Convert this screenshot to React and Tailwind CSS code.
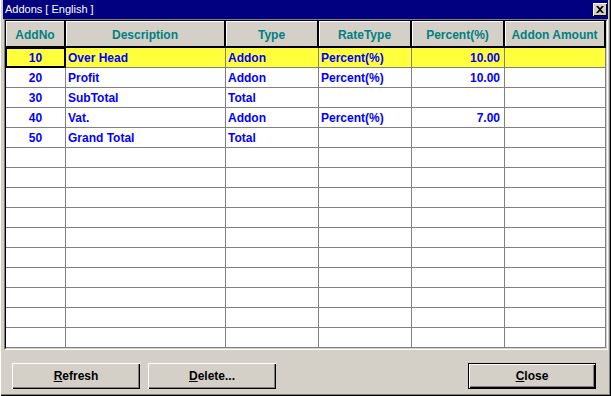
import React from 'react';

const rows = [
    { no: '10', desc: 'Over Head', type: 'Addon', rate: 'Percent(%)', pct: '10.00' },
    { no: '20', desc: 'Profit', type: 'Addon', rate: 'Percent(%)', pct: '10.00' },
    { no: '30', desc: 'SubTotal', type: 'Total', rate: '', pct: '' },
    { no: '40', desc: 'Vat.', type: 'Addon', rate: 'Percent(%)', pct: '7.00' },
    { no: '50', desc: 'Grand Total', type: 'Total', rate: '', pct: '' },
];

while (rows.length < 15) rows.push({ no: '', desc: '', type: '', rate: '', pct: '' });

const headers = ['AddNo', 'Description', 'Type', 'RateType', 'Percent(%)', 'Addon Amount'];

const cols = 'grid grid-cols-[60px_160px_93px_93px_93px_1fr]';

function WinButton({ children, isDefault }) {
    const inner = (
        <div className="h-full w-full bg-[#d4d0c8] shadow-[inset_1px_1px_0_#fff,inset_-1px_-1px_0_#000,inset_-2px_-2px_0_#808080] flex items-center justify-center text-[12px] font-bold text-black">
            {children}
        </div>
    );
    if (isDefault) {
        return <div className="w-[128px] h-[26px] border border-black">{inner}</div>;
    }
    return <div className="w-[128px] h-[26px]">{inner}</div>;
}

export default function App() {
    return (
        <div
            className="w-[611px] h-[396px] bg-[#d4d0c8] pl-[3px] shadow-[inset_1px_0_0_#fff,inset_-1px_-1px_0_#000,inset_-2px_-2px_0_#808080] flex flex-col"
            style={{ fontFamily: '"Liberation Sans", Arial, sans-serif' }}
        >
            {/* title bar */}
            <div className="w-[605px] h-[19px] bg-[#000080] flex items-center justify-between pl-[2px] pr-[1px]">
                <span className="text-white text-[11px] leading-none">Addons [ English ]</span>
                <div className="w-[14px] h-[13px] bg-[#d4d0c8] shadow-[inset_1px_1px_0_#fff,inset_-1px_-1px_0_#000] flex items-center justify-center">
                    <svg width="8" height="7" viewBox="0 0 8 7">
                        <path d="M0 0h2l2 2 2-2h2L5 3.5 8 7H6L4 5 2 7H0l3-3.5z" fill="#000" />
                    </svg>
                </div>
            </div>

            {/* grid */}
            <div className="ml-[1px] w-[604px] border border-t-[#808080] border-l-[#808080] border-r-white border-b-white">
                <div className="border border-t-black border-l-black border-r-[#d4d0c8] border-b-[#d4d0c8] bg-white">
                    <div className={cols + ' h-[27px]'}>
                        {headers.map((h) => (
                            <div
                                key={h}
                                className="bg-[#d4d0c8] border-r-2 border-b-2 border-black shadow-[inset_1px_1px_0_#fff] flex items-center justify-center pt-[3px] text-[12px] font-bold text-[#008080]"
                            >
                                {h}
                            </div>
                        ))}
                    </div>
                    {rows.map((r, i) => {
                        const sel = i === 0;
                        const bg = sel ? 'bg-[#ffff3c]' : 'bg-white';
                        const cell = 'h-[20px] border-r border-b border-[#808080] flex items-center text-[12px] font-bold text-[#0000ff] leading-none whitespace-nowrap overflow-hidden ' + bg;
                        return (
                            <div key={i} className={cols}>
                                <div className={cell + ' justify-center' + (sel ? ' shadow-[inset_1px_1px_0_#000,inset_-1px_-1px_0_#000] border-black' : '')}>{r.no}</div>
                                <div className={cell + ' pl-[2px]'}>{r.desc}</div>
                                <div className={cell + ' pl-[2px]'}>{r.type}</div>
                                <div className={cell + ' pl-[2px]'}>{r.rate}</div>
                                <div className={cell + ' justify-end pr-[4px]'}>{r.pct}</div>
                                <div className={cell}></div>
                            </div>
                        );
                    })}
                </div>
            </div>

            {/* buttons */}
            <div className="flex items-start mt-[13px] pl-[9px] pr-[15px]">
                <div className="flex gap-[8px]">
                    <WinButton><span><span className="underline">R</span>efresh</span></WinButton>
                    <WinButton><span><span className="underline">D</span>elete...</span></WinButton>
                </div>
                <div className="ml-auto">
                    <WinButton isDefault><span><span className="underline">C</span>lose</span></WinButton>
                </div>
            </div>
        </div>
    );
}
